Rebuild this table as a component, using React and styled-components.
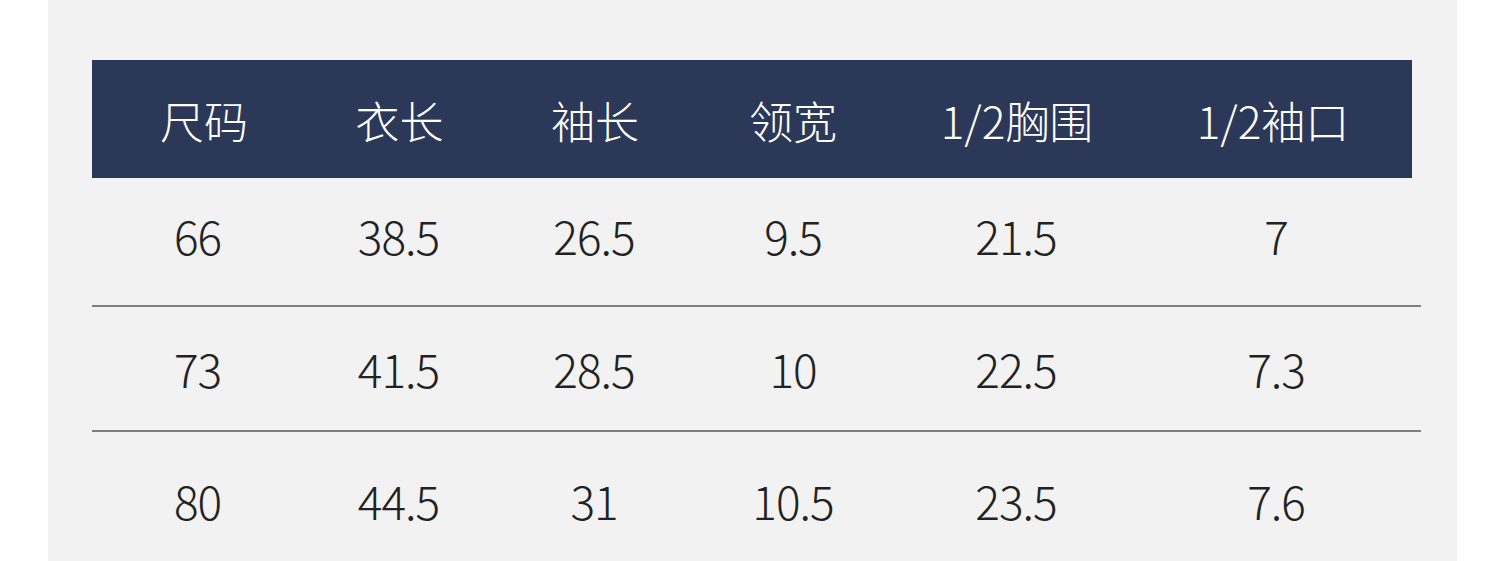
import React from 'react';
import styled, { createGlobalStyle } from 'styled-components';

const GlobalStyle = createGlobalStyle`
  html, body {
    margin: 0;
    padding: 0;
    background: #ffffff;
  }
  body {
    font-family: "Noto Sans CJK SC", "Noto Sans", sans-serif;
  }
`;

const Page = styled.div`
  width: 1504px;
  height: 561px;
  overflow: hidden;
  background: #ffffff;
`;

const Panel = styled.div`
  margin-left: 48px;
  width: 1409px;
  height: 561px;
  box-sizing: border-box;
  padding: 60px 0 0 44px;
  background: #f2f2f2;
`;

const Table = styled.div`
  width: 1329px;
  display: flex;
  flex-direction: column;
`;

const HeaderRow = styled.div`
  width: 1320px;
  height: 118px;
  background: #2c3858;
  display: grid;
  grid-template-columns: 224px 167px 224px 172px 276px 236px;
  align-items: center;
`;

const HeadCell = styled.div`
  text-align: center;
  color: #ffffff;
  font-size: 44px;
  font-weight: 300;
  line-height: 1;
  padding-top: 2px;
`;

const BodyRow = styled.div`
  height: ${(p) => p.h}px;
  display: grid;
  grid-template-columns: 211px 191px 200px 198px 248px 272px;
  align-items: start;
  box-sizing: border-box;
  padding-top: ${(p) => p.pad}px;
  border-bottom: ${(p) => (p.last ? 'none' : '2px solid #7f7f7f')};
`;

const Cell = styled.div`
  text-align: center;
  color: #222222;
  font-size: 46px;
  font-weight: 300;
  line-height: 1;
  letter-spacing: -1px;
`;

const headers = ['尺码', '衣长', '袖长', '领宽', '1/2胸围', '1/2袖口'];

const rows = [
  { h: 129, pad: 34, values: ['66', '38.5', '26.5', '9.5', '21.5', '7'] },
  { h: 125, pad: 38, values: ['73', '41.5', '28.5', '10', '22.5', '7.3'] },
  { h: 130, pad: 45, values: ['80', '44.5', '31', '10.5', '23.5', '7.6'] },
];

export default function App() {
  return (
    <Page>
      <GlobalStyle />
      <Panel>
        <Table>
          <HeaderRow>
            {headers.map((t) => (
              <HeadCell key={t}>{t}</HeadCell>
            ))}
          </HeaderRow>
          {rows.map((row, idx) => (
            <BodyRow
              key={idx}
              h={row.h}
              pad={row.pad}
              last={idx === rows.length - 1}
            >
              {row.values.map((v, i) => (
                <Cell key={i}>{v}</Cell>
              ))}
            </BodyRow>
          ))}
        </Table>
      </Panel>
    </Page>
  );
}
